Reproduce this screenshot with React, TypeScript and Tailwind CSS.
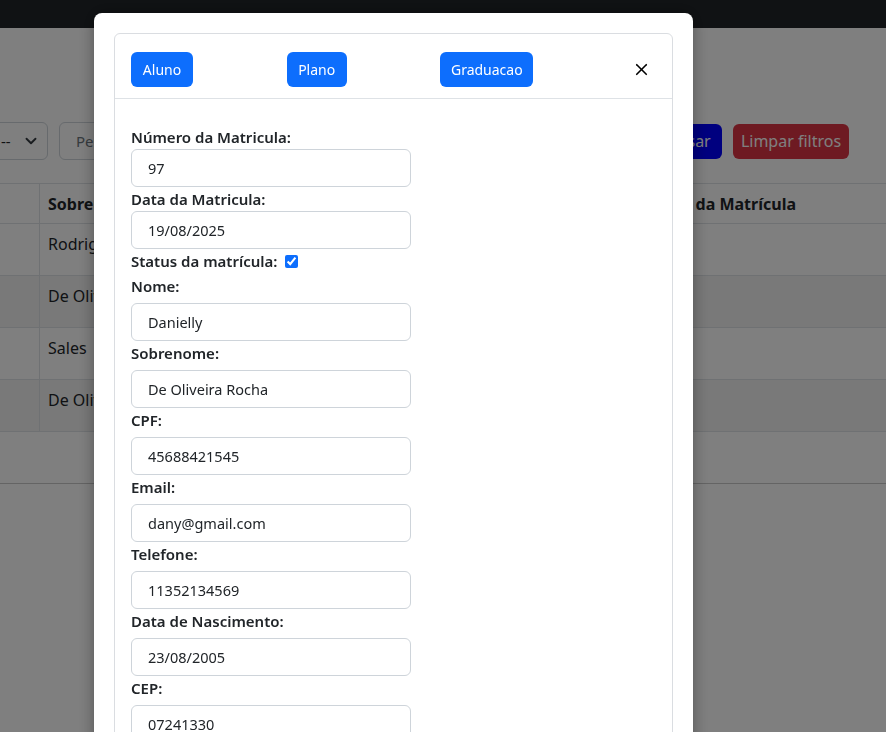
import { X } from 'lucide-react';

const fields: { label: string; value: string }[] = [
  { label: 'Nome:', value: 'Danielly' },
  { label: 'Sobrenome:', value: 'De Oliveira Rocha' },
  { label: 'CPF:', value: '45688421545' },
  { label: 'Email:', value: 'dany@gmail.com' },
  { label: 'Telefone:', value: '11352134569' },
  { label: 'Data de Nascimento:', value: '23/08/2005' },
  { label: 'CEP:', value: '07241330' },
  { label: 'Endereço:', value: 'Rua das Flores' },
];

const rows = ['Rodrigues', 'De Oliveira', 'Sales', 'De Oliveira'];

function Field({ label, value, gap }: { label: string; value: string; gap?: boolean }) {
  return (
    <div className="flex flex-col">
      <label className={`h-6 text-[15px] font-semibold leading-6 text-[#212529] ${gap ? 'mb-[5px]' : ''}`}>{label}</label>
      <input
        readOnly
        value={value}
        className="h-[38px] w-[280px] rounded-md border border-[#ced4da] px-4 text-[14.5px] text-[#212529] outline-none"
      />
    </div>
  );
}

export default function App() {
  return (
    <div className="relative min-h-screen overflow-hidden bg-white font-['Noto_Sans',sans-serif] text-[#212529]">
      {/* page behind the modal */}
      <div className="relative z-0">
        <nav className="h-[28px] bg-[#212529]" />
        <div className="h-[94px]" />
        <div className="flex h-[38px] items-center">
          <div className="ml-[-40px] flex h-[38px] w-[88px] items-center justify-between rounded-md border border-[#ced4da] pl-[40px] pr-[10px] text-[15px]">
            <span>--</span>
            <svg width="12" height="12" viewBox="0 0 16 16"><path d="M2 5l6 6 6-6" fill="none" stroke="#343a40" strokeWidth="2.5" strokeLinecap="round" strokeLinejoin="round" /></svg>
          </div>
          <div className="ml-[11px] flex h-[38px] w-[560px] items-center rounded-md border border-[#ced4da] px-4 text-[15px] text-[#6c757d]">Pesquisar</div>
          <button className="ml-[-7px] h-[35px] w-[110px] rounded-md bg-[#0000ff] pl-[14px] text-[16px] text-white">Pesquisar</button>
          <button className="ml-[11px] h-[35px] w-[116px] rounded-md bg-[#dc3545] text-[16px] text-white">Limpar filtros</button>
        </div>
        <div className="mt-[23px] border-t border-[#dee2e6]">
          <div className="flex h-[40px] items-center border-b border-[#dee2e6]">
            <div className="h-full w-[40px] border-r border-[#dee2e6]" />
            <div className="flex-1 pl-2 text-[16px] font-bold">Sobrenome</div>
            <div className="pr-[90px] text-[16px] font-bold">Status da Matrícula</div>
          </div>
          {rows.map((r, i) => (
            <div key={i} className={`flex h-[52px] border-b border-[#dee2e6] ${i % 2 === 1 ? 'bg-[#f2f2f2]' : ''}`}>
              <div className="h-full w-[40px] border-r border-[#dee2e6]" />
              <div className="pl-2 pt-2 text-[16px]">{r}</div>
            </div>
          ))}
          <div className="h-[52px] border-b border-[#c8c8c8]" />
        </div>
      </div>

      {/* overlay + modal */}
      <div className="fixed inset-0 z-10 bg-black/50">
        <div className="ml-[94px] mt-[13px] h-[760px] w-[599px] rounded-lg bg-white p-5 shadow-[0_0_16px_rgba(0,0,0,0.35)]">
          <div className="h-[760px] rounded-md border border-[#dadde1]">
            <div className="flex h-[65px] items-start justify-between border-b border-[#dee2e6] px-4 pt-[18px]">
              <button className="h-[35px] w-[62px] rounded-md bg-[#0d6efd] text-[14px] text-white">Aluno</button>
              <button className="h-[35px] w-[60px] rounded-md bg-[#0d6efd] text-[14px] text-white">Plano</button>
              <button className="h-[35px] w-[93px] rounded-md bg-[#0d6efd] text-[14px] text-white">Graduacao</button>
              <button className="mt-[3px] flex h-[29px] w-[29px] items-center justify-center text-black">
                <X size={19} strokeWidth={2.1} />
              </button>
            </div>
            <div className="flex flex-col px-4 pt-[26px]">
              <Field label="Número da Matricula:" value="97" />
              <Field label="Data da Matricula:" value="19/08/2025" />
              <div className="flex h-[25px] items-center text-[15px] font-semibold">
                Status da matrícula:
                <input type="checkbox" defaultChecked className="ml-2 h-[13px] w-[13px] accent-[#0d6efd]" />
              </div>
              {fields.map(f => (
                <Field key={f.label} label={f.label} value={f.value} gap />
              ))}
            </div>
          </div>
        </div>
      </div>
    </div>
  );
}
